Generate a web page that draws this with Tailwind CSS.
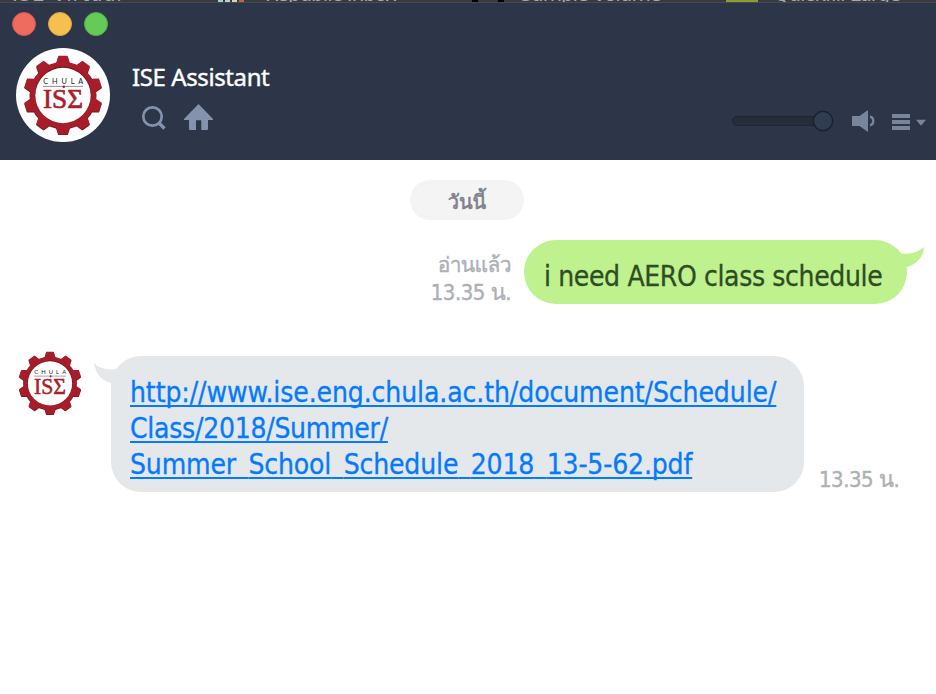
<!DOCTYPE html>
<html lang="th">
<head>
<meta charset="utf-8">
<title>ISE Assistant</title>
<script src="https://cdn.jsdelivr.net/npm/@tailwindcss/browser@4"></script>
</head>
<body class="w-[936px] h-[694px] overflow-hidden bg-white font-['DejaVu_Sans_Condensed','DejaVu_Sans','Loma','Waree','Noto_Sans_Thai_Looped','Noto_Sans_Thai','Noto_Sans',sans-serif] [font-stretch:condensed]">
<svg class="hidden" aria-hidden="true">
  <symbol id="gear" viewBox="-40 -40 80 80">
    <g fill="#801722" transform="translate(0 .9)">
      <circle r="33.500"/>
      <path id="tooth" d="M-7.400-31L-4.900-38.800Q-4.700-39.400-4-39.400H4Q4.700-39.400 4.900-38.800L7.400-31Z"/>
      <use href="#tooth" transform="rotate(36)"/><use href="#tooth" transform="rotate(72)"/><use href="#tooth" transform="rotate(108)"/><use href="#tooth" transform="rotate(144)"/><use href="#tooth" transform="rotate(180)"/><use href="#tooth" transform="rotate(216)"/><use href="#tooth" transform="rotate(252)"/><use href="#tooth" transform="rotate(288)"/><use href="#tooth" transform="rotate(324)"/>
    </g>
    <g fill="#a71d29">
      <circle r="33.200"/>
      <path id="face" d="M-7-31L-4.500-39.200H4.500L7-31Z"/>
      <use href="#face" transform="rotate(36)"/><use href="#face" transform="rotate(72)"/><use href="#face" transform="rotate(108)"/><use href="#face" transform="rotate(144)"/><use href="#face" transform="rotate(180)"/><use href="#face" transform="rotate(216)"/><use href="#face" transform="rotate(252)"/><use href="#face" transform="rotate(288)"/><use href="#face" transform="rotate(324)"/>
    </g>
    <circle r="28.400" fill="#7d1620"/>
    <circle r="27.700" cy=".5" fill="#fff"/>
    <text x="-19.800" y="-11.300" font-family="Lato, sans-serif" font-size="7.300" fill="#222" textLength="40">CHULA</text>
    <path d="M-20-8.600H20" stroke="#777" stroke-width=".8"/>
    <circle cx=".8" cy="-8.300" r="1.300" fill="#a91f2b"/>
    <text x="-20" y="13.300" font-family="Liberation Serif, serif" font-size="28" fill="#a91f2b" stroke="#a91f2b" stroke-width=".7" textLength="40" lengthAdjust="spacingAndGlyphs">ISΣ</text>
  </symbol>
</svg>

<div class="h-0.5 bg-[#383a3b] overflow-hidden flex text-[22px] leading-[22px] text-[#a5a8ac] whitespace-nowrap">
  <div class="w-[218px] shrink-0 pl-3 -mt-[17px] tracking-[0.8px]">ISE Virtual</div>
  <div class="w-[27px] shrink-0 h-0.5 flex gap-0.5"><i class="w-[5px] bg-[#a8cfcf]"></i><i class="w-[5px] bg-[#b5d2cf]"></i><i class="w-[5px] bg-[#d5d8ae]"></i><i class="w-[5px] bg-[#c85d50]"></i></div>
  <div class="w-[227px] shrink-0 pl-5 -mt-[17px] tracking-[-1px]">Republic Inbox</div>
  <div class="w-[48px] shrink-0 h-0.5 flex gap-5"><i class="w-1.5 bg-black"></i><i class="w-1.5 bg-black"></i></div>
  <div class="w-[206px] shrink-0 -mt-[17px] tracking-[-1px]">Sample volume</div>
  <div class="w-8 shrink-0 h-0.5 bg-[#8aa12f]"></div>
  <div class="pl-[16px] -mt-[17px] tracking-[-1px]">Quickfill Large</div>
</div>

<header class="h-[158px] bg-[#2d3648] border-t border-[#434b5b] flex flex-col">
  <div class="flex gap-3 pl-3 pt-[9px]">
    <span class="size-6 rounded-full bg-[#ed6b5f] border border-[#d9544b]"></span>
    <span class="size-6 rounded-full bg-[#f5c04f] border border-[#dba53c]"></span>
    <span class="size-6 rounded-full bg-[#63cb56] border border-[#4fb042]"></span>
  </div>
  <div class="flex pl-4 pt-3">
    <div class="size-[94px] rounded-full bg-white flex items-center justify-center"><svg class="size-20"><use href="#gear"/></svg></div>
    <div class="ml-[22px] pt-[14px]">
      <h1 class="font-['Noto_Sans',sans-serif] text-[24px] leading-[30px] text-white tracking-[-0.4px] whitespace-nowrap [-webkit-text-stroke:0.4px_white]">ISE Assistant</h1>
      <div class="flex pl-2 pt-2.5 gap-[16px]">
        <svg class="w-7 h-8" viewBox="0 0 28 32" fill="none" stroke="#8492ae"><circle cx="12.500" cy="14.500" r="9.200" stroke-width="2.700"/><path d="M18.700 20.700L24.500 26.500" stroke-width="3.400"/></svg>
        <svg class="w-[30px] h-8" viewBox="0 0 30 32" fill="#8492ae"><path d="M14.500 2L29 17.100V18H24V27Q24 28 23 28H17.300V18.200H12V28H6Q5 28 5 27V18H0V17.100Z"/></svg>
      </div>
    </div>
    <div class="ml-auto mt-[58px] pr-[9px] flex items-center h-[30px]">
      <svg class="w-[196px] h-[30px]" viewBox="0 0 196 30">
        <rect x="1.500" y="10.500" width="90" height="9" rx="4.500" fill="#252c3a" stroke="#1f2633"/>
        <circle cx="92" cy="15" r="9.700" fill="#303c51" stroke="#1b212d" stroke-width="1.400"/>
        <g fill="#78859a"><path d="M121 10H128.500L137 4V26L128.500 20H121Z"/><path d="M139 10.700Q142.300 11.200 142.300 15T139 19.300" fill="none" stroke="#78859a" stroke-width="2.300"/>
        <path d="M161 8H179V12H161ZM161 14H179V18H161ZM161 20H179V24H161ZM185 13.800H195L190 19.800Z"/></g>
      </svg>
    </div>
  </div>
</header>

<main class="pt-5">
  <div class="ml-[410px] w-[114px] h-10 rounded-full bg-[#f4f4f4] text-center text-[20px] leading-[45px] text-[#7d828b] [-webkit-text-stroke:0.6px_#7d828b]">วันนี้</div>

  <div class="mt-5 h-16 flex">
    <div class="w-[511px] pt-[11px] text-right text-[22px] leading-7 text-[#adb0b7] [-webkit-text-stroke:0.4px_#adb0b7]"><p class="text-[21px] tracking-[-0.6px]">อ่านแล้ว</p><p class="tracking-[-0.5px]">13.35 น.</p></div>
    <div class="relative ml-[13px] w-[383px] h-16 rounded-[32px] bg-[#bff18e] pl-5 pt-[19px]">
      <p class="text-[28px] leading-9 text-[#2f4d23] tracking-[-0.37px] whitespace-nowrap [-webkit-text-stroke:0.3px_#2f4d23]">i need AERO class schedule</p>
      <svg class="absolute left-[370px] top-1.5 w-[30px] h-6" viewBox="0 0 30 24" fill="#bff18e"><path d="M5 7Q20 10 30 1Q29 16 13 21L5 20Z"/></svg>
    </div>
  </div>

  <div class="mt-[52px] flex items-start">
    <svg class="ml-[18px] -mt-[5px] size-16"><use href="#gear"/></svg>
    <div class="relative ml-[29px] w-[693px] h-[136px] rounded-[30px] bg-[#e4e8eb] pl-[19px] pt-[19px]">
      <svg class="absolute -left-[17px] top-1.5 w-[30px] h-6" viewBox="0 0 30 24" fill="#e4e8eb"><path d="M0 1Q7 9 24 7L23 20L17 21Q2 17 0 1Z"/></svg>
      <a class="relative block text-[28px] leading-9 text-[#047aff] whitespace-nowrap underline decoration-2 underline-offset-[3px] [text-decoration-skip-ink:none] [-webkit-text-stroke:0.3px_#047aff]"><span class="block w-fit tracking-[-0.1px]">http://www.ise.eng.chula.ac.th/document/Schedule/</span><span class="block w-fit tracking-[-0.27px]">Class/2018/Summer/</span><span class="block w-fit tracking-[-0.15px]">Summer<span class="text-transparent [-webkit-text-stroke:0]">_</span>School<span class="text-transparent [-webkit-text-stroke:0]">_</span>Schedule<span class="text-transparent [-webkit-text-stroke:0]">_</span>2018<span class="text-transparent [-webkit-text-stroke:0]">_</span>13-5-62.pdf</span></a>
    </div>
    <p class="ml-[15px] mt-[110px] text-[22px] leading-7 text-[#adb0b7] tracking-[-0.5px] whitespace-nowrap [-webkit-text-stroke:0.4px_#adb0b7]">13.35 น.</p>
  </div>
</main>
</body>
</html>
